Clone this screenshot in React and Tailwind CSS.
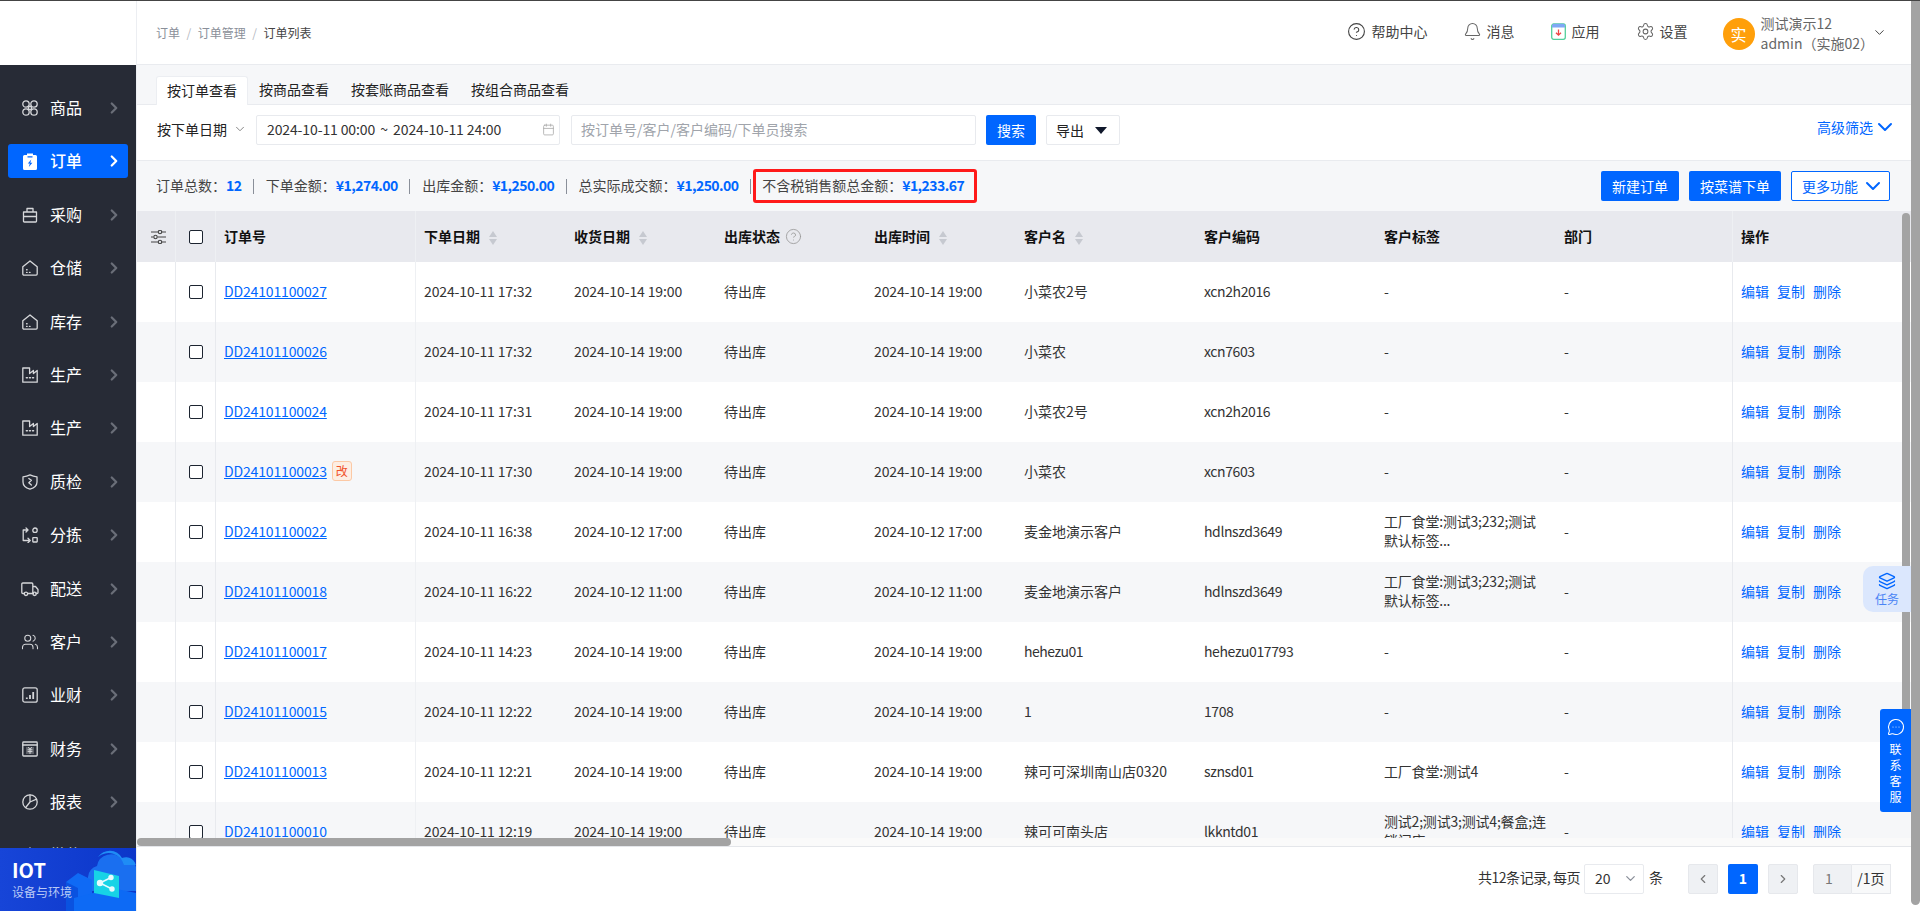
import React from "react";
import { ChevronRight, ChevronDown, ChevronLeft, CircleHelp, Bell, Settings, Users, Layers, MessageCircleMore, Calendar } from "lucide-react";

const I = ({ children }) => (
  <svg width="16" height="16" viewBox="0 0 16 16" fill="none" stroke="#d6d7da" strokeWidth="1.300" strokeLinecap="round" strokeLinejoin="round" className="shrink-0">{children}</svg>
);
const House = () => <I><path d="M.8 6.800 8 .9l7.200 5.900v7.300a1.100 1.100 0 0 1-1.100 1.100H1.900a1.100 1.100 0 0 1-1.100-1.100z" /><path d="M4.600 9.800h.5M4.600 12.400h.5M7.500 12.400h.5" strokeWidth="1.400" /></I>;
const Factory = () => <I><path d="M.8 1v14.200h14.400V3.500l-3.800 3V3.500l-3.800 3V1z" /><path d="M4.300 10.800h1.100M7.400 10.800h1.100M10.500 10.800h1.100" strokeWidth="1.400" /></I>;
const navItems = [
  ["商品", <I><circle cx="4" cy="4" r="3.200" /><circle cx="12" cy="4" r="3.200" /><circle cx="4" cy="12" r="3.200" /><circle cx="12" cy="12" r="3.200" /><path d="M6.500 6.500h3v3h-3z" /></I>],
  ["订单", <svg width="16" height="17" viewBox="0 0 16 17" className="shrink-0"><path fill="#fff" d="M5 .5h6v1.500h2.500A1.500 1.500 0 0 1 15 3.500v12A1.500 1.500 0 0 1 13.500 17h-11A1.500 1.500 0 0 1 1 15.500v-12A1.500 1.500 0 0 1 2.500 2H5z" /><path fill="#0066ff" d="M5.500 3.200h5v1.300h-5zM9.300 6.500 5.800 10.500h2L6.800 14l3.600-4.200H8.300z" /></svg>],
  ["采购", <I><path d="M1.500 5h13v9.200a.8.800 0 0 1-.8.800H2.300a.8.800 0 0 1-.8-.8zM5 5V1.500h6V5M1.500 9.500h13" /></I>],
  ["仓储", <House />],
  ["库存", <House />],
  ["生产", <Factory />],
  ["生产", <Factory />],
  ["质检", <I><path d="M1 2.800C3.500 2.500 6 1.800 8 .9c2 .9 4.500 1.600 7 1.900v5.200c0 3.500-3 6-7 7.200-4-1.200-7-3.700-7-7.200z" /><path d="m6.800 4.500 2.600 1.800-2.600 2.400 2.600 2.300" /></I>],
  ["分拣", <I><path d="M5.500 3H1.200v10.500h5.300M4 .9 6 3 4 5M6 11.300l2.200 2.200L6 15.700" /><circle cx="13" cy="3.200" r="2.200" /><rect x="10.800" y="10.600" width="4.400" height="4.400" rx=".4" /></I>],
  ["配送", <svg width="18" height="16" viewBox="0 0 18 16" fill="none" stroke="#d6d7da" strokeWidth="1.300" strokeLinecap="round" strokeLinejoin="round" className="shrink-0"><path d="M3 12.500H1.800a1 1 0 0 1-1-1V3a1 1 0 0 1 1-1h9a1 1 0 0 1 1 1v9.500H7M12 5.500h2.500L17 8.500v3a1 1 0 0 1-1 1h-1M12 12.500h.5" /><circle cx="5" cy="12.800" r="1.700" /><circle cx="13.600" cy="12.800" r="1.700" /></svg>],
  ["客户", <Users size={18} strokeWidth={1.400} color="#d6d7da" className="shrink-0" />],
  ["业财", <I><rect x=".8" y=".8" width="14.400" height="14.400" rx="2" /><path d="M4.800 12v-1.500M8 12V8M11.200 12V5" strokeWidth="1.800" strokeLinecap="butt" /></I>],
  ["财务", <I><rect x=".8" y="1" width="14.400" height="14" rx=".8" /><path d="M.8 4h14.400" /><rect x="4" y="6" width="8" height="7" fill="#d6d7da" fillOpacity=".3" stroke="none" /><path d="m6.500 6.500 1.500 1.800 1.500-1.800M6 8.800h4M6 10.600h4M8 8.500v4" strokeWidth="1" /></I>],
  ["报表", <I><circle cx="8" cy="8" r="7.200" /><path d="M8 .8V8l-4.300 5.500M8 8l6.500-2.800" /></I>],
  ["微信", <House />],
];

const Sort = () => (
  <svg width="8" height="14" viewBox="0 0 8 14" className="shrink-0 ml-[9px] mt-[2px]"><path d="M4 0l4 6H0zM4 14 0 8h8z" fill="#c6c9d0" /></svg>
);

const cols = "grid grid-cols-[38px_40px_200px_151px_150px_150px_150px_180px_180px_180px_176px_170px]";
const Cell = ({ children, className = "" }) => <div className={"flex items-center pl-2 min-w-0 " + className}>{children}</div>;
const Body = ({ children, className = "" }) => <div className={"flex items-center pl-2 pb-[2px] min-w-0 " + className}>{children}</div>;

const rows = [
  ["DD24101100027", "2024-10-11 17:32", "2024-10-14 19:00", "小菜农2号", "xcn2h2016", "-"],
  ["DD24101100026", "2024-10-11 17:32", "2024-10-14 19:00", "小菜农", "xcn7603", "-"],
  ["DD24101100024", "2024-10-11 17:31", "2024-10-14 19:00", "小菜农2号", "xcn2h2016", "-"],
  ["DD24101100023", "2024-10-11 17:30", "2024-10-14 19:00", "小菜农", "xcn7603", "-", true],
  ["DD24101100022", "2024-10-11 16:38", "2024-10-12 17:00", "麦金地演示客户", "hdlnszd3649", ["工厂食堂:测试3;232;测试", "默认标签..."]],
  ["DD24101100018", "2024-10-11 16:22", "2024-10-12 11:00", "麦金地演示客户", "hdlnszd3649", ["工厂食堂:测试3;232;测试", "默认标签..."]],
  ["DD24101100017", "2024-10-11 14:23", "2024-10-14 19:00", "hehezu01", "hehezu017793", "-"],
  ["DD24101100015", "2024-10-11 12:22", "2024-10-14 19:00", "1", "1708", "-"],
  ["DD24101100013", "2024-10-11 12:21", "2024-10-14 19:00", "辣可可深圳南山店0320", "sznsd01", "工厂食堂:测试4"],
  ["DD24101100010", "2024-10-11 12:19", "2024-10-14 19:00", "辣可可南头店", "lkkntd01", ["测试2;测试3;测试4;餐盒;连", "锁门店"]],
];

const Stat = ({ label, value }) => (
  <span className="flex items-center mb-[2px]">
    <span className="text-[#444]">{label}：</span>
    <span className="font-bold text-[#0066ff] tracking-[-0.55px]">{value}</span>
  </span>
);
const Sep = () => <span className="w-px h-[15px] bg-[#8a8f99] mx-[11.7px]" />;
const Check = () => <span className="block w-[14px] h-[14px] rounded-[2px] border border-[#1c2430] bg-white" />;

export default function App() {
  return (
    <div className="relative flex h-[911px] w-full overflow-hidden border-t border-[#444] bg-white font-['Noto_Sans_CJK_SC','Noto_Sans',sans-serif] text-[14px] text-[#333]">
      <aside className="w-[136px] shrink-0 flex flex-col">
        <div className="h-[64px] shrink-0 bg-white" />
        <nav className="flex-1 min-h-0 overflow-hidden bg-[#272b36] pt-[26px] flex flex-col gap-[19.4px]">
          {navItems.map(([t, ic], i) => (
            <div key={i} className={"h-[34px] shrink-0 mx-[8px] w-[120px] rounded-[3px] flex items-center pl-[14px] text-[16px] leading-none " + (i === 1 ? "bg-[#0066ff] text-white font-medium" : "text-white")}>
              <span className="w-[16px] flex justify-center">{ic}</span>
              <span className="ml-[12px] pb-[2px]">{t}</span>
              <ChevronRight size={18} strokeWidth={3} className={"ml-[23px] " + (i === 1 ? "text-white" : "text-[#6a6e78]")} />
            </div>
          ))}
        </nav>
        <div className="relative h-[63px] shrink-0 overflow-hidden bg-gradient-to-r from-[#1745d8] to-[#0c36c9] pl-[12px] pt-[9px] text-white">
          <svg className="absolute right-0 top-0" width="72" height="63" viewBox="0 0 72 63">
            <path d="M24 29a12 12 0 0 1 9-11 14 14 0 0 1 25-6 12 12 0 0 1 14 7v24H24z" fill="#1a6ff0" />
            <path d="M34 9a14 14 0 0 1 24 1 10 10 0 0 1 14 9v-2H60a16 16 0 0 0-26-8z" fill="#1f8cf5" />
            <path d="M2 34 14 25l14 7v31H2z" fill="#0f6af5" />
            <path d="M2 34l12 6v23H2z" fill="#0a52e0" />
            <path d="M10 50 48 40l24 5v18H10z" fill="#0d6af5" />
            <path d="M30 22l25 6v22l-25-5z" fill="#17d3e6" />
            <g fill="#e6fbff" stroke="#e6fbff" strokeWidth="1.400"><circle cx="36" cy="35" r="2.500" /><circle cx="47" cy="29.500" r="2" /><circle cx="48" cy="41" r="2" /><path d="M36 35l11-5.500M36 35l12 6" fill="none" /></g>
          </svg>
          <div className="relative text-[20px] font-bold leading-[26px]">IOT</div>
          <div className="relative text-[12px] leading-[18px] text-[#b9c9f5]">设备与环境</div>
        </div>
      </aside>

      <main className="flex-1 min-w-0 flex flex-col border-l border-[#eceef2] pr-[9px]">
        <header className="h-[64px] shrink-0 border-b border-[#e9ebef] flex items-center justify-between pl-[19px] pr-[24px]">
          <div className="flex items-center text-[12px] text-[#8a8f99]">
            <span>订单</span><span className="mx-[6.5px] text-[#b5b8bf]">/</span>
            <span>订单管理</span><span className="mx-[6.5px] text-[#b5b8bf]">/</span>
            <span className="text-[#444]">订单列表</span>
          </div>
          <div className="flex items-center text-[#444] pb-[2px]">
            <CircleHelp size={19} strokeWidth={1.400} />
            <span className="ml-[6px]">帮助中心</span>
            <Bell size={19} strokeWidth={1.300} className="ml-[35px] text-[#666]" />
            <span className="ml-[5px]">消息</span>
            <svg width="15" height="17" viewBox="0 0 15 17" className="ml-[36px]"><rect x=".7" y="1" width="13.600" height="15.300" rx="2" fill="#fff" stroke="#54cf9b" strokeWidth="1.300" /><path d="M1 4.500V2.500A1.800 1.800 0 0 1 2.800.7h9.400A1.800 1.800 0 0 1 14 2.500v2z" fill="#7fa8f5" /><path d="M7.500 6.500V12M5 9.700l2.500 2.500L10 9.700" stroke="#ef4444" strokeWidth="1.300" fill="none" /></svg>
            <span className="ml-[6px]">应用</span>
            <Settings size={19} strokeWidth={1.300} className="ml-[36px] text-[#666]" />
            <span className="ml-[5px]">设置</span>
            <span className="ml-[35px] mt-[4px] w-[32px] h-[32px] rounded-full bg-[#ff9f0a] text-white text-[16px] flex items-center justify-center">实</span>
            <div className="ml-[6px] mt-[2px] leading-[20px] text-[#666]">
              <div>测试演示12</div>
              <div>admin（实施02）</div>
            </div>
            <ChevronDown size={15} strokeWidth={1.600} className="-ml-[2px] mt-[2px]" />
          </div>
        </header>

        <div className="h-[40px] shrink-0 bg-[#f6f7f9] border-b border-[#e9ebef] flex items-end pl-[19px]">
          <div className="h-[29px] -mb-px pb-[2px] px-[10px] mr-[-1px] bg-white border border-b-0 border-[#eceef2] rounded-t-[3px] flex items-center text-[#222]">按订单查看</div>
          {["按商品查看", "按套账商品查看", "按组合商品查看"].map((t) => (
            <div key={t} className="h-[28px] ml-[2px] pb-[2px] px-[10px] flex items-center text-[#222]">{t}</div>
          ))}
        </div>

        <div className="h-[56px] shrink-0 bg-white border-b border-[#e9ebef] flex items-start pl-[20px] pt-[10px] pr-[14px]">
          <div className="h-[30px] pb-[2px] flex items-center text-[#222]">
            按下单日期
            <ChevronDown size={14} strokeWidth={1.500} className="ml-[6px] text-[#777]" />
          </div>
          <div className="ml-[9px] w-[304px] h-[30px] pb-[2px] border border-[#e8eaee] rounded-[2px] flex items-center pl-[10px] pr-[4px] justify-between text-[#333]">
            <span className="flex items-center tracking-[-0.12px]">2024-10-11 00:00<span className="w-[18px] text-center">~</span>2024-10-11 24:00</span>
            <Calendar size={13} strokeWidth={1.500} className="text-[#aaa]" />
          </div>
          <div className="ml-[11px] w-[405px] h-[30px] pb-[2px] border border-[#e8eaee] rounded-[2px] flex items-center pl-[9px] text-[#a0a4ab]">按订单号/客户/客户编码/下单员搜索</div>
          <button className="ml-[10px] w-[50px] h-[30px] bg-[#0066ff] text-white rounded-[2px]">搜索</button>
          <button className="ml-[10px] w-[74px] h-[30px] border border-[#e8eaee] rounded-[2px] flex items-center pl-[9px] text-[#222]">
            导出
            <svg width="12" height="7" viewBox="0 0 12 7" className="ml-[11px]"><path d="M0 0h12L6 7z" fill="#10182b" /></svg>
          </button>
          <div className="ml-auto -mt-[2px] h-[28px] flex items-center text-[#0066ff]">
            高级筛选
            <ChevronDown size={24} strokeWidth={2} />
          </div>
        </div>

        <div className="h-[50px] shrink-0 bg-[#f6f7f9] flex items-center pl-[19px] pr-[21px]">
          <Stat label="订单总数" value="12" /><Sep />
          <Stat label="下单金额" value="¥1,274.00" /><Sep />
          <Stat label="出库金额" value="¥1,250.00" /><Sep />
          <Stat label="总实际成交额" value="¥1,250.00" />
          <span className="w-px h-[15px] bg-[#8a8f99] ml-[11.7px]" />
          <div className="ml-[2px] h-[34px] w-[224px] border-[3px] border-[#ff1a1a] rounded-[3px] flex items-center pl-[6px] shrink-0">
            <Stat label="不含税销售额总金额" value="¥1,233.67" />
          </div>
          <button className="ml-auto w-[78px] h-[30px] bg-[#0066ff] text-white rounded-[2px]">新建订单</button>
          <button className="ml-[10px] w-[92px] h-[30px] bg-[#0066ff] text-white rounded-[2px]">按菜谱下单</button>
          <button className="ml-[10px] w-[99px] h-[30px] bg-white border border-[#0066ff] text-[#0066ff] rounded-[2px] flex items-center pl-[10px]">
            更多功能
            <ChevronDown size={24} strokeWidth={2} className="ml-[3px]" />
          </button>
        </div>

        <div className="relative flex-1 min-h-0 flex flex-col bg-white">
          <div className="flex-1 min-h-0 overflow-hidden">
            <div className={cols + " h-[51px] bg-[#e8e9ee] text-[#111] font-bold"}>
              <Cell className="pl-[14px] pr-0">
                <svg width="15" height="14" viewBox="0 0 15 14" fill="none" stroke="#444" strokeWidth="1.100"><path d="M0 2h7M11 2h4M0 7h2.500M6.500 7H15M0 12h7M11 12h4" /><circle cx="9" cy="2" r="1.700" /><circle cx="4.500" cy="7" r="1.700" /><circle cx="9" cy="12" r="1.700" /></svg>
              </Cell>
              <Cell className="border-l border-[#eef0f3] justify-center !pl-0"><Check /></Cell>
              <Cell className="border-l border-[#eef0f3]">订单号</Cell>
              <Cell className="border-l border-[#eef0f3]">下单日期<Sort /></Cell>
              <Cell>收货日期<Sort /></Cell>
              <Cell>出库状态<CircleHelp size={17} strokeWidth={1.200} className="ml-[5px] text-[#999]" /></Cell>
              <Cell>出库时间<Sort /></Cell>
              <Cell>客户名<Sort /></Cell>
              <Cell>客户编码</Cell>
              <Cell>客户标签</Cell>
              <Cell>部门</Cell>
              <Cell className="border-l border-[#eef0f3]">操作</Cell>
            </div>
            {rows.map((r, i) => (
              <div key={r[0]} className={cols + " h-[60px] " + (i % 2 ? "bg-[#f6f7f9]" : "bg-white")}>
                <div />
                <Cell className="border-l border-[#e8eaee] justify-center !pl-0"><Check /></Cell>
                <Body className="border-l border-[#e8eaee]">
                  <span className="text-[#0066ff] underline tracking-[-0.15px]">{r[0]}</span>
                  {r[6] && <span className="ml-[5px] w-[20px] h-[20px] rounded-[3px] border border-[#fcc9a5] bg-[#fdeee3] text-[#f0512a] text-[12px] flex items-center justify-center">改</span>}
                </Body>
                <Body className="border-l border-[#eef0f3] tracking-[-0.12px]">{r[1]}</Body>
                <Body className="tracking-[-0.12px]">{r[2]}</Body>
                <Body>待出库</Body>
                <Body className="tracking-[-0.12px]">{r[2]}</Body>
                <Body className={/^[a-z]/.test(r[3]) ? "tracking-[-0.5px]" : ""}>{r[3]}</Body>
                <Body className="tracking-[-0.4px]">{r[4]}</Body>
                <Body className="leading-[19px] tracking-[-0.2px]">
                  {Array.isArray(r[5]) ? <div>{r[5][0]}<br />{r[5][1]}</div> : r[5]}
                </Body>
                <Body>-</Body>
                <Body className="border-l border-[#e8eaee] text-[#0066ff] gap-[8px]">
                  <span>编辑</span><span>复制</span><span>删除</span>
                </Body>
              </div>
            ))}
          </div>
          <div className="h-[9px] shrink-0 bg-[#fafafa] border-b border-[#e4e6ea]" />

          <div className="absolute left-0 bottom-[1px] w-[594px] h-[8px] rounded-full bg-[#a3a3a3]" />
          <div className="absolute right-[1px] top-[2px] w-[8px] h-[570px] rounded-full bg-[#a3a3a3]" />
        </div>

        <footer className="h-[64px] shrink-0 bg-white flex items-center justify-end pr-[20px] pb-[1px]">
          <span className="pb-[2px] tracking-[-0.45px]">共12条记录, 每页</span>
          <div className="ml-[4px] w-[60px] h-[30px] border border-[#e8eaee] rounded-[2px] flex items-center justify-between pl-[10px] pr-[5px]">
            20<ChevronDown size={15} strokeWidth={2} className="text-[#8a8f99]" />
          </div>
          <span className="ml-[5px] pb-[2px]">条</span>
          <button className="ml-[25px] w-[30px] h-[30px] bg-[#eff1f4] border border-[#e6e8ec] rounded-[2px] flex items-center justify-center"><ChevronLeft size={14} className="text-[#777]" /></button>
          <button className="ml-[10px] w-[30px] h-[30px] bg-[#0066ff] text-white font-bold rounded-[2px]">1</button>
          <button className="ml-[10px] w-[30px] h-[30px] bg-[#eff1f4] border border-[#e6e8ec] rounded-[2px] flex items-center justify-center"><ChevronRight size={14} className="text-[#777]" /></button>
          <div className="ml-[15px] w-[39px] h-[30px] bg-[#eff1f4] border border-[#e6e8ec] rounded-l-[2px] flex items-center pl-[11px] text-[#777]">1</div>
          <div className="w-[39px] h-[30px] border border-l-0 border-[#e6e8ec] bg-[#f8f9fa] flex items-center justify-center">/1页</div>
        </footer>
      </main>

      <div className="absolute right-[9px] top-[565px] w-[48px] h-[46px] rounded-l-[10px] bg-[#dbe7fd] flex flex-col items-center justify-center text-[#0066ff]">
        <Layers size={18} strokeWidth={1.800} />
        <span className="text-[12px] leading-[16px] mt-[1px] text-[#4a84f5]">任务</span>
      </div>
      <div className="absolute right-[9px] top-[708px] w-[31px] h-[103px] rounded-l-[3px] bg-[#0066ff] flex flex-col items-center pt-[9px] text-white text-[12px] leading-[16px]">
        <MessageCircleMore size={18} strokeWidth={1.400} className="mb-[5px]" />
        <span>联</span><span>系</span><span>客</span><span>服</span>
      </div>
      <div className="absolute right-0 top-0 w-[9px] h-[904px] rounded-b-full bg-[#a3a3a3]" />
    </div>
  );
}
